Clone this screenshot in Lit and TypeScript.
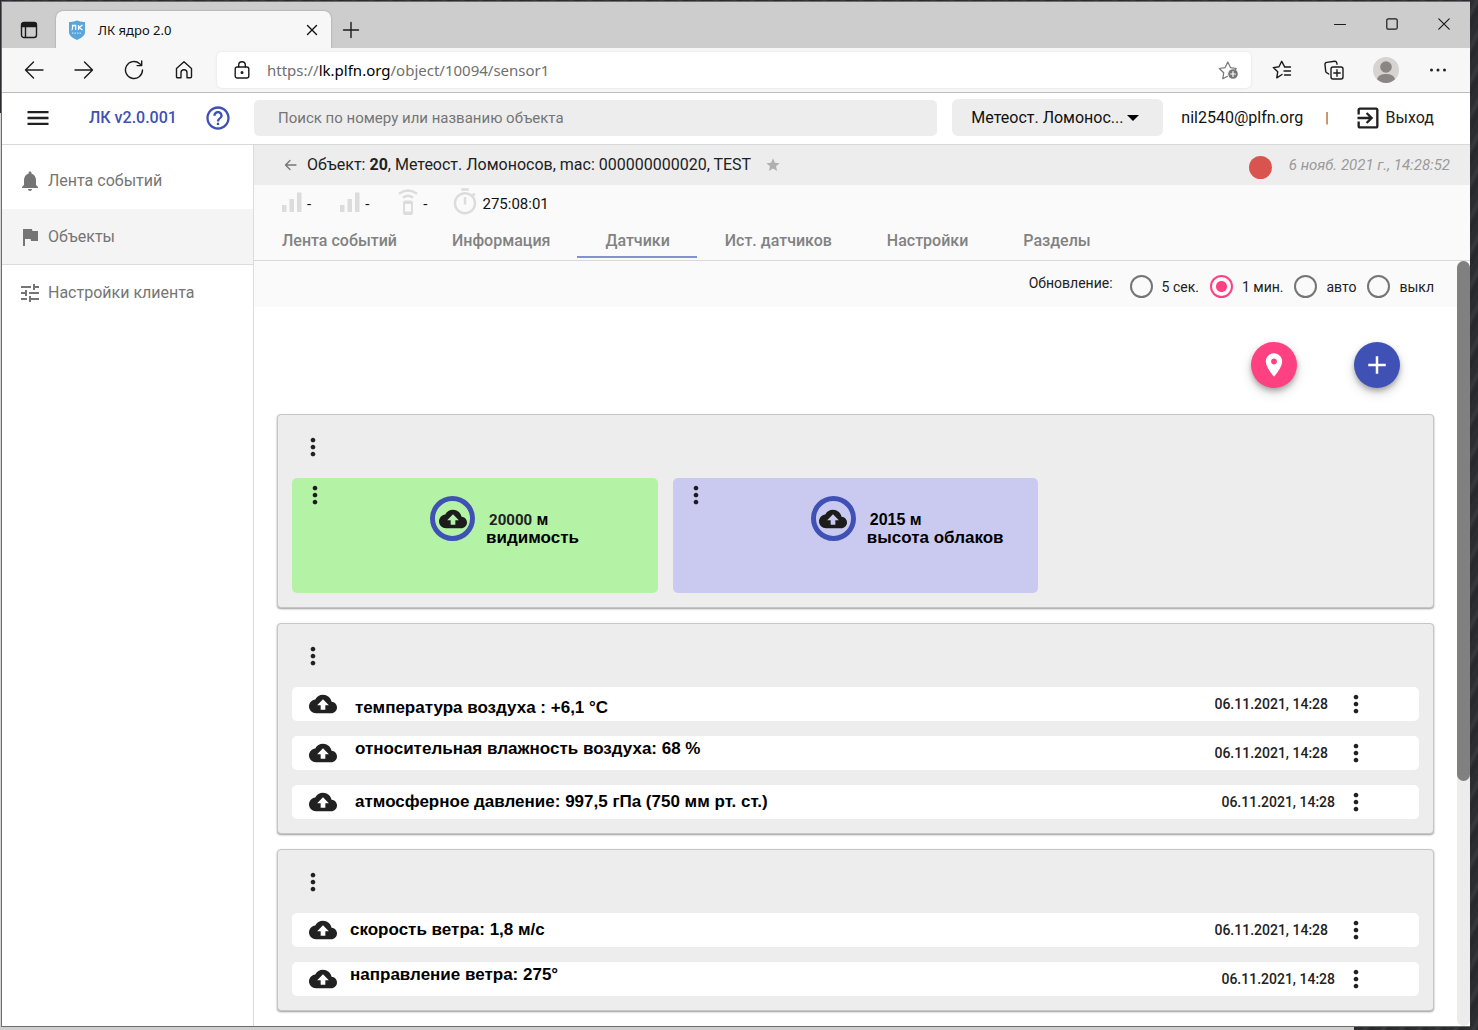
import { LitElement, html, css, svg, nothing } from "lit";
import { customElement, property, state } from "lit/decorators.js";
import { classMap } from "lit/directives/class-map.js";

/* ---------- icons ---------- */

const PATHS: Record<string, string> = {
  menu: "M3 18h18v-2H3v2zm0-5h18v-2H3v2zm0-7v2h18V6H3z",
  help: "M11 18h2v-2h-2v2zm1-16C6.48 2 2 6.48 2 12s4.48 10 10 10 10-4.48 10-10S17.52 2 12 2zm0 18c-4.41 0-8-3.59-8-8s3.59-8 8-8 8 3.59 8 8-3.59 8-8 8zm0-14c-2.21 0-4 1.79-4 4h2c0-1.1.9-2 2-2s2 .9 2 2c0 2-3 1.75-3 5h2c0-2.25 3-2.5 3-5 0-2.21-1.79-4-4-4z",
  exit: "M10.09 15.59L11.5 17l5-5-5-5-1.41 1.41L12.67 11H3v2h9.67l-2.58 2.59zM19 3H5c-1.11 0-2 .9-2 2v4h2V5h14v14H5v-4H3v4c0 1.1.89 2 2 2h14c1.1 0 2-.9 2-2V5c0-1.1-.9-2-2-2z",
  bell: "M12 22c1.1 0 2-.9 2-2h-4c0 1.1.89 2 2 2zm6-6v-5c0-3.07-1.64-5.64-4.5-6.32V4c0-.83-.67-1.5-1.5-1.5s-1.5.67-1.5 1.5v.68C7.63 5.36 6 7.92 6 11v5l-2 2v1h16v-1l-2-2z",
  flag: "M14.4 6L14 4H5v17h2v-7h5.6l.4 2h7V6z",
  tune: "M3 17v2h6v-2H3zM3 5v2h10V5H3zm10 16v-2h8v-2h-8v-2h-2v6h2zM7 9v2H3v2h4v2h2V9H7zm14 4v-2H11v2h10zm-6-4h2V7h4V5h-4V3h-2v6z",
  star: "M12 17.27L18.18 21l-1.64-7.03L22 9.24l-7.19-.61L12 2 9.19 8.63 2 9.24l5.46 4.73L5.82 21z",
  timer: "M15 1H9v2h6V1zm-4 13h2V8h-2v6zm8.03-6.61l1.42-1.42c-.43-.51-.9-.99-1.41-1.41l-1.42 1.42C16.07 4.74 14.12 4 12 4c-4.97 0-9 4.03-9 9s4.02 9 9 9 9-4.03 9-9c0-2.12-.74-4.07-1.97-5.61zM12 20c-3.87 0-7-3.13-7-7s3.13-7 7-7 7 3.13 7 7-3.13 7-7 7z",
  place: "M12 2C8.13 2 5 5.13 5 9c0 5.25 7 13 7 13s7-7.75 7-13c0-3.87-3.13-7-7-7zm0 9.5c-1.38 0-2.5-1.12-2.5-2.5s1.12-2.5 2.5-2.5 2.5 1.12 2.5 2.5-1.12 2.5-2.5 2.5z",
  add: "M19 13h-6v6h-2v-6H5v-2h6V5h2v6h6v2z",
  more: "M12 8c1.1 0 2-.9 2-2s-.9-2-2-2-2 .9-2 2 .9 2 2 2zm0 2c-1.1 0-2 .9-2 2s.9 2 2 2 2-.9 2-2-.9-2-2-2zm0 6c-1.1 0-2 .9-2 2s.9 2 2 2 2-.9 2-2-.9-2-2-2z",
  cloud: "M19.35 10.04C18.67 6.59 15.64 4 12 4 9.11 4 6.6 5.64 5.35 8.04 2.34 8.36 0 10.91 0 14c0 3.31 2.69 6 6 6h13c2.76 0 5-2.24 5-5 0-2.64-2.05-4.78-4.65-4.96zM14 13v4h-4v-4H7l5-5 5 5h-3z",
};

const icon = (name: string, size = 24) => html`
  <svg width=${size} height=${size} viewBox="0 0 24 24" fill="currentColor" aria-hidden="true">
    <path d=${PATHS[name]}></path>
  </svg>`;

const line = (w: number, h: number, body: unknown, stroke = "1.4") => html`
  <svg width=${w} height=${h} viewBox="0 0 ${w} ${h}" fill="none" stroke="currentColor"
    stroke-width=${stroke} stroke-linecap="round" stroke-linejoin="round" aria-hidden="true">${body}</svg>`;

const reset = css`
  *, *::before, *::after { box-sizing: border-box; }
  button, input, select { font: inherit; color: inherit; margin: 0; }
  button {
    display: inline-flex; align-items: center; justify-content: center;
    padding: 0; border: 0; background: none; cursor: pointer;
  }
  a { color: inherit; text-decoration: none; }
  svg { display: block; flex: none; }
`;

/* ---------- browser frame ---------- */

@customElement("browser-chrome")
export class BrowserChrome extends LitElement {
  static styles = [reset, css`
    :host { display: block; font-family: "Noto Sans", "Open Sans", sans-serif; color: #1b1b1b; }
    .strip {
      display: flex; align-items: flex-end; height: 46px;
      background: #cdcdcd;
    }
    .pages { width: 54px; height: 37px; }
    .tab {
      display: flex; align-items: center; width: 275px; height: 37px;
      padding: 0 11px 0 12px; border-radius: 7px 7px 0 0;
      background: #f7f7f7; box-shadow: 0 0 2px rgba(0, 0, 0, 0.3);
      font-size: 13px; color: #111;
    }
    .title { flex: 1; margin-left: 12px; }
    .new { width: 40px; height: 37px; }
    .controls { display: flex; align-self: flex-start; margin-left: auto; }
    .controls button { width: 52px; height: 44px; }
    .bar {
      position: relative; display: flex; align-items: center; height: 45px;
      background: #f7f7f7; border-bottom: 1px solid #bbb;
    }
    .nav { display: flex; width: 215px; padding-left: 7px; }
    .nav button { width: 50px; height: 40px; }
    .address {
      display: flex; align-items: center; flex: 1; height: 36px;
      padding: 0 11px 0 17px; border-radius: 5px; background: #fff;
      box-shadow: 0 0 3px rgba(0, 0, 0, 0.1);
    }
    .url { flex: 1; margin-left: 17px; font-size: 15px; color: #6f6f6f; }
    .host { color: #000; }
    .fav { color: #777; }
    .tools { display: flex; padding: 0 6px 0 5px; }
    .tools button { width: 52px; height: 40px; }
  `];

  render() {
    return html`
      <div class="strip">
        <button class="pages" aria-label="Вкладки">${line(18, 18, svg`
          <rect x="1.5" y="1.5" width="15" height="15" rx="2.5"></rect>
          <path d="M2 2.5h14v3H2z" fill="currentColor"></path><path d="M5.5 6v10"></path>`)}</button>
        <div class="tab">
          <svg width="18" height="20" viewBox="0 0 18 20" aria-hidden="true">
            <path d="M1 2Q5 2.4 9 .6 13 2.4 17 2v10c0 4-4 6-8 8-4-2-8-4-8-8z" fill="#58a6dc"></path>
            <g stroke="#fff" stroke-width="1.3" fill="none">
              <path d="M3.6 10c1 0 1-1 1-4.5h3V10M10.5 5v5M14.5 5l-3.4 2.6L14.5 10"></path>
              <path d="M4 13.2h10" stroke-dasharray="1.5 1" opacity=".6"></path>
            </g>
          </svg>
          <span class="title">ЛК ядро 2.0</span>
          <button aria-label="Закрыть вкладку">${line(16, 16, svg`<path d="M3.5 3.5l9 9M12.5 3.5l-9 9"></path>`)}</button>
        </div>
        <button class="new" aria-label="Новая вкладка">${line(18, 18, svg`<path d="M9 1.5v15M1.5 9h15"></path>`)}</button>
        <div class="controls">
          <button aria-label="Свернуть">${line(12, 12, svg`<path d="M.5 6.5h11"></path>`, "1")}</button>
          <button aria-label="Развернуть">${line(12, 12, svg`<rect x=".8" y=".8" width="10.4" height="10.4" rx="1.5"></rect>`, "1.2")}</button>
          <button aria-label="Закрыть">${line(12, 12, svg`<path d="M.8.8l10.4 10.4M11.2.8L.8 11.2"></path>`, "1.2")}</button>
        </div>
      </div>
      <div class="bar">
        <div class="nav">
          <button aria-label="Назад">${line(20, 20, svg`<path d="M19 10H1.5M9.5 2l-8 8 8 8"></path>`)}</button>
          <button aria-label="Вперёд">${line(20, 20, svg`<path d="M1 10h17.5M10.5 2l8 8-8 8"></path>`)}</button>
          <button aria-label="Обновить">${line(20, 20, svg`<path d="M18.5 10a8.5 8.5 0 1 1-2.8-6.3l1.8 1.6M17.7 1v4.600h-4.600"></path>`)}</button>
          <button aria-label="Домой">${line(18, 20, svg`<path d="M1.5 8.5L9 1.8l7.5 6.7v8.3a1 1 0 0 1-1 1h-3.5v-5a3 3 0 0 0-6 0v5H2.5a1 1 0 0 1-1-1z"></path>`)}</button>
        </div>
        <div class="address">
          ${line(16, 20, svg`<rect x="1.2" y="7" width="13.6" height="11" rx="2"></rect>
            <path d="M4.7 7V5a3.3 3.3 0 0 1 6.6 0v2"></path>
            <circle cx="8" cy="12.5" r=".8" fill="currentColor"></circle>`)}
          <div class="url" role="textbox" aria-label="Адрес">https://<span class="host">lk.plfn.org</span>/object/10094/sensor1</div>
          <button class="fav" aria-label="В избранное">${line(22, 20, svg`
            <path d="M9.5 16.3l-4.7 2.5.9-6L1.3 8.5l5.9-.9L9.8 2l2.7 5.6 5.8.9-1 1.1"></path>
            <circle cx="15" cy="14" r="4.8" fill="currentColor" stroke="none"></circle>
            <path d="M12.6 14h4.8M15 11.6v4.8" stroke="#fff"></path>`, "1.2")}</button>
        </div>
        <div class="tools">
          <button aria-label="Избранное">${line(20, 20, svg`
            <path d="M10 14.5l-5.2 3.3.9-6L1.3 7.6l5.7-.9 2.7-5.4 2.7 5.1M12.5 7h6M12 11h6.5M12.5 15h6"></path>`)}</button>
          <button aria-label="Коллекции">${line(20, 20, svg`
            <rect x="7" y="7" width="12" height="12" rx="2"></rect><path d="M13 9.8v6.4M9.8 13h6.4"></path>
            <path d="M4.8 14L2.6 12.7a2 2 0 0 1-.9-1.4L1 4.6a2 2 0 0 1 1.7-2.2l7.8-1.2a2 2 0 0 1 2.2 1.5l.3 1.5"></path>`)}</button>
          <button aria-label="Профиль">
            <svg width="26" height="26" viewBox="0 0 26 26" aria-hidden="true">
              <circle cx="13" cy="13" r="13" fill="#d6d3d1"></circle>
              <circle cx="13" cy="10" r="5.8" fill="#8a8684"></circle>
              <path d="M4 22.3c1-4 5-5.3 9-5.3s8 1.3 9 5.3a13 13 0 0 1-18 0z" fill="#8a8684"></path>
            </svg>
          </button>
          <button aria-label="Меню">
            <svg width="18" height="4" viewBox="0 0 18 4" fill="#222" aria-hidden="true">
              <circle cx="2.5" cy="2" r="1.5"></circle><circle cx="9" cy="2" r="1.5"></circle><circle cx="15.5" cy="2" r="1.5"></circle>
            </svg>
          </button>
        </div>
      </div>`;
  }
}

/* ---------- sensor cards ---------- */

interface Tile { value: string; unit: string; label: string; tone: string; accent?: boolean }
interface Reading { text: string; date: string; align: "start" | "center" | "end"; near?: boolean }

@customElement("sensor-card")
export class SensorCard extends LitElement {
  @property({ attribute: false }) tiles: Tile[] = [];
  @property({ attribute: false }) readings: Reading[] = [];
  @property({ type: Boolean }) compact = false;

  static styles = [reset, css`
    :host {
      display: block; padding: 0 14px 14px;
      border: 1px solid #c6c6c6; border-radius: 4px; background: #ededed;
      box-shadow: 0 1px 2px rgba(0, 0, 0, 0.4);
      color: #212121;
    }
    .head { display: flex; align-items: center; height: 63px; padding-left: 7px; }
    .tiles { display: grid; grid-template-columns: repeat(3, 1fr); gap: 15px; }
    .tile {
      display: grid; grid-template-columns: 3fr 5fr; min-height: 115px;
      border-radius: 5px; color: #1c1c1c;
    }
    .green { background: #b4f3a5; }
    .violet { background: #cacaf0; }
    .tile-menu { align-self: start; justify-self: start; margin: 3px 0 0 9px; }
    .measure { display: flex; align-items: flex-start; gap: 11px; padding: 18px 0 0 1px; }
    .ring {
      display: flex; align-items: center; justify-content: center; flex: none;
      width: 45px; height: 45px; border: 5px solid #3f51b5; border-radius: 50%;
    }
    .caption {
      padding-top: 15px; color: #000; white-space: nowrap;
      font: bold 17px/18px "Liberation Sans", Arial, sans-serif;
    }
    .value { padding-left: 3px; font-size: 16px; }
    .digits { font-family: Roboto, sans-serif; font-size: 15px; color: #212121; }
    .rows { display: flex; flex-direction: column; gap: 15px; margin: 0; padding: 0; list-style: none; }
    .row {
      display: flex; align-items: center; min-height: 34px;
      padding: 0 49px 0 17px; border-radius: 5px; background: #fff;
    }
    .text {
      flex: 1; padding-left: 18px; color: #000;
      font: bold 17px/26px "Liberation Sans", Arial, sans-serif;
    }
    .compact .text { padding-left: 13px; }
    .start { align-self: flex-start; }
    .center { align-self: center; }
    .end { align-self: flex-end; }
    time { margin-right: 14px; font: 500 14px/20px Roboto, sans-serif; }
    .near time { margin-right: 7px; }
  `];

  render() {
    return html`
      <div class="head"><button aria-label="Меню группы">${icon("more", 28)}</button></div>
      ${this.tiles.length ? html`
        <div class="tiles">
          ${this.tiles.map((t) => html`
            <div class="tile ${t.tone}">
              <button class="tile-menu" aria-label="Меню датчика">${icon("more", 28)}</button>
              <div class="measure">
                <div class="ring">${icon("cloud", 28)}</div>
                <div class="caption">
                  <div class="value"><span class=${classMap({ digits: !!t.accent })}>${t.value}</span> ${t.unit}</div>
                  <div>${t.label}</div>
                </div>
              </div>
            </div>`)}
        </div>` : nothing}
      ${this.readings.length ? html`
        <ul class="rows ${classMap({ compact: this.compact })}">
          ${this.readings.map((r) => html`
            <li class="row ${classMap({ near: !!r.near })}">
              ${icon("cloud", 28)}
              <span class="text ${r.align}">${r.text}</span>
              <time>${r.date}</time>
              <button aria-label="Меню датчика">${icon("more", 28)}</button>
            </li>`)}
        </ul>` : nothing}`;
  }
}

/* ---------- application ---------- */

const DATE = "06.11.2021, 14:28";

const TILES: Tile[] = [
  { value: "20000", unit: "м", label: "видимость", tone: "green", accent: true },
  { value: "2015", unit: "м", label: "высота облаков", tone: "violet" },
];
const AIR: Reading[] = [
  { text: "температура воздуха : +6,1 °C", date: DATE, align: "end" },
  { text: "относительная влажность воздуха: 68 %", date: DATE, align: "start" },
  { text: "атмосферное давление: 997,5 гПа (750 мм рт. ст.)", date: DATE, align: "center", near: true },
];
const WIND: Reading[] = [
  { text: "скорость ветра: 1,8 м/с", date: DATE, align: "center" },
  { text: "направление ветра: 275°", date: DATE, align: "start", near: true },
];

const NAV = [
  { icon: "bell", label: "Лента событий" },
  { icon: "flag", label: "Объекты" },
  { icon: "tune", label: "Настройки клиента" },
];
const TABS = ["Лента событий", "Информация", "Датчики", "Ист. датчиков", "Настройки", "Разделы"];
const RATES = ["5 сек.", "1 мин.", "авто", "выкл"];

const signal = html`
  <svg width="20" height="20" viewBox="0 0 20 20" fill="currentColor" aria-hidden="true">
    <path d="M0 13h4.5v7H0zM7.5 7H12v13H7.5zM15 .5h4.5V20H15z"></path>
  </svg>`;
const remote = html`
  <svg width="20" height="26" viewBox="0 0 20 26" fill="none" stroke="currentColor" stroke-width="2" aria-hidden="true">
    <path d="M1 4.800Q10-2 19 4.800M5 8.800q5-4 10 0" stroke-width="2.4"></path>
    <rect x="6" y="12.5" width="8" height="12.5" rx="1"></rect><path d="M6 14h8M6 23.5h8"></path>
  </svg>`;

@customElement("app-root")
export class AppRoot extends LitElement {
  @state() private tab = 2;
  @state() private rate = 1;

  static styles = [reset, css`
    :host {
      display: flex; flex-direction: column; box-sizing: border-box; min-height: 100vh;
      padding: 1px 8px 3px 1px;
      background:
        linear-gradient(#cfcfcf, #cfcfcf) left bottom / calc(100% - 124px) 4px no-repeat,
        linear-gradient(#2a2b2f 113px, #d4d4d4 113px) left top / 2px 100% no-repeat,
        repeating-linear-gradient(118deg, #2b2d30 0 5px, #36383b 8px 9px, #27292c 12px 16px);
      font: 16px/20px Roboto, sans-serif; color: #212121;
    }
    .window {
      display: flex; flex-direction: column; flex: 1; background: #fff;
      border: 1px solid #6c6c6c; border-right: 0;
    }
    .top {
      display: flex; align-items: center; height: 52px; padding: 0 36px 2px 0;
      border-bottom: 1px solid #d9d9d9;
    }
    .brand { display: flex; align-items: center; width: 252px; padding-left: 22px; }
    .name { flex: 1; margin-left: 37px; font-weight: 500; color: #3f51b5; }
    .help { margin-right: 22px; color: #3f51b5; }
    .search { display: flex; flex: 1; }
    .search input {
      width: 100%; height: 36px; padding: 0 24px; border: 0; border-radius: 5px;
      background: #ededed; font-size: 15px; outline: 0;
    }
    .search input::placeholder { color: #757575; opacity: 1; }
    .picker { display: grid; align-items: center; width: 211px; margin: 0 18px 0 15px; }
    .picker > * { grid-area: 1 / 1; }
    .picker select {
      width: 100%; height: 37px; padding: 0 36px 0 19px; border: 0; border-radius: 6px;
      background: #ededed; appearance: none; color: #111;
    }
    .picker svg { justify-self: end; margin-right: 24px; pointer-events: none; }
    .mail { color: #111; }
    .sep { margin: 0 25px 0 22px; font-size: 14px; color: #555; }
    .logout { gap: 4px; }
    .body { display: flex; flex: 1; }
    .side { width: 252px; padding-top: 8px; border-right: 1px solid #dcdcdc; color: #757575; }
    .item { display: flex; align-items: center; gap: 6px; height: 56px; padding-left: 16px; }
    .current { background: #f4f4f4; border-bottom: 1px solid #dcdcdc; }
    .main { display: flex; flex-direction: column; flex: 1; min-width: 0; }
    .object {
      display: flex; align-items: center; height: 40px; padding: 0 20px 0 30px;
      background: #ededed; color: #212121;
    }
    .object-name { margin: 0 14px 0 10px; font: inherit; white-space: nowrap; }
    .back { color: #757575; }
    .fav { color: #b0b0b0; }
    .dot { width: 23px; height: 23px; margin: 5px 17px 0 auto; border-radius: 50%; background: #d9534f; }
    .stamp { font-size: 15px; font-style: italic; color: #9a9a9a; white-space: nowrap; }
    .info { background: #fafafa; border-bottom: 1px solid #d9d9d9; }
    .status { display: flex; align-items: center; gap: 29px; height: 37px; padding-left: 28px; }
    .stat { display: flex; align-items: center; gap: 5px; font-size: 15px; color: #111; }
    .stat svg { margin-bottom: 4px; color: #dcdcdc; }
    .uptime svg { margin: 0 -3px 4px -6px; }
    .tabs { display: flex; padding-bottom: 2px; }
    .tab {
      height: 36px; padding: 0 27px 0 28px; border-bottom: 2px solid transparent;
      font-weight: 500; line-height: 37px; color: #828282; white-space: nowrap;
    }
    .active { border-color: #8590cf; }
    .scroll { display: flex; flex: 1; }
    .content { flex: 1; min-width: 0; padding-bottom: 14px; }
    .refresh {
      display: flex; justify-content: flex-end; height: 46px; padding: 0 23px 0 0;
      background: #fafafa; font-size: 14px;
    }
    .refresh-name { margin-right: 17px; line-height: 44px; }
    .rates { display: flex; align-items: center; gap: 11px; padding-top: 5px; }
    .rate { display: flex; align-items: center; gap: 9px; }
    .rate input {
      appearance: none; width: 23px; height: 23px; border: 2px solid #757575; border-radius: 50%;
    }
    .rate input:checked { border-color: #ff4081; background: radial-gradient(circle, #ff4081 5px, transparent 6px); }
    .actions { display: flex; justify-content: flex-end; gap: 57px; padding: 35px 57px 26px 0; }
    .fab {
      width: 46px; height: 46px; border-radius: 50%; color: #fff;
      box-shadow: 0 3px 5px rgba(0, 0, 0, 0.25), 0 5px 12px rgba(0, 0, 0, 0.16);
    }
    .pink { background: #ff4081; }
    .blue { background: #3f51b5; }
    .cards { display: flex; flex-direction: column; gap: 15px; padding: 0 23px; }
    .track { width: 13px; border-radius: 7px; background: #ececec; }
    .thumb { height: 68%; border-radius: 7px; background: #808080; }
  `];

  render() {
    return html`
      <div class="window">
        <browser-chrome></browser-chrome>
        <header class="top">
          <div class="brand">
            <button aria-label="Меню">${icon("menu", 28)}</button>
            <a class="name" href="#home">ЛК v2.0.001</a>
            <button class="help" aria-label="Справка">${icon("help", 28)}</button>
          </div>
          <div class="search">
            <input type="text" aria-label="Поиск" placeholder="Поиск по номеру или названию объекта" />
          </div>
          <div class="picker">
            <select aria-label="Объект"><option>Метеост. Ломонос...</option></select>
            <svg width="12" height="6" viewBox="0 0 12 6" aria-hidden="true"><path d="M0 0h12L6 6z" fill="#000"></path></svg>
          </div>
          <span class="mail">nil2540@plfn.org</span>
          <span class="sep">|</span>
          <button class="logout">${icon("exit", 28)}<span>Выход</span></button>
        </header>
        <div class="body">
          <nav class="side">
            ${NAV.map((n, i) => html`
              <a class="item ${classMap({ current: i === 1 })}" href="#nav${i}">${icon(n.icon)}<span>${n.label}</span></a>`)}
          </nav>
          <main class="main">
            <div class="object">
              <button class="back" aria-label="Назад к списку">${line(13, 12, svg`<path d="M12 6H1.5M6 1.5L1.5 6 6 10.5"></path>`, "1.3")}</button>
              <h1 class="object-name">Объект: <b>20</b>, Метеост. Ломоносов, mac: 000000000020, TEST</h1>
              <button class="fav" aria-label="В избранное">${icon("star", 16)}</button>
              <span class="dot"></span>
              <time class="stamp">6 нояб. 2021 г., 14:28:52</time>
            </div>
            <div class="info">
              <div class="status">
                <span class="stat">${signal}-</span>
                <span class="stat">${signal}-</span>
                <span class="stat">${remote}-</span>
                <span class="stat uptime">${icon("timer", 30)}275:08:01</span>
              </div>
              <nav class="tabs">
                ${TABS.map((t, i) => html`
                  <a class="tab ${classMap({ active: i === this.tab })}" href="#tab${i}"
                    @click=${() => (this.tab = i)}>${t}</a>`)}
              </nav>
            </div>
            <div class="scroll">
              <div class="content">
                <div class="refresh" role="radiogroup" aria-labelledby="refresh-name">
                  <span class="refresh-name" id="refresh-name">Обновление:</span>
                  <div class="rates">
                    ${RATES.map((r, i) => html`
                      <label class="rate"><input type="radio" name="rate" .checked=${i === this.rate}
                        @change=${() => (this.rate = i)} /><span>${r}</span></label>`)}
                  </div>
                </div>
                <div class="actions">
                  <button class="fab pink" aria-label="Показать на карте">${icon("place", 28)}</button>
                  <button class="fab blue" aria-label="Добавить">${icon("add", 30)}</button>
                </div>
                <div class="cards">
                  <sensor-card .tiles=${TILES}></sensor-card>
                  <sensor-card .readings=${AIR}></sensor-card>
                  <sensor-card compact .readings=${WIND}></sensor-card>
                </div>
              </div>
              <div class="track"><div class="thumb"></div></div>
            </div>
          </main>
        </div>
      </div>`;
  }
}
